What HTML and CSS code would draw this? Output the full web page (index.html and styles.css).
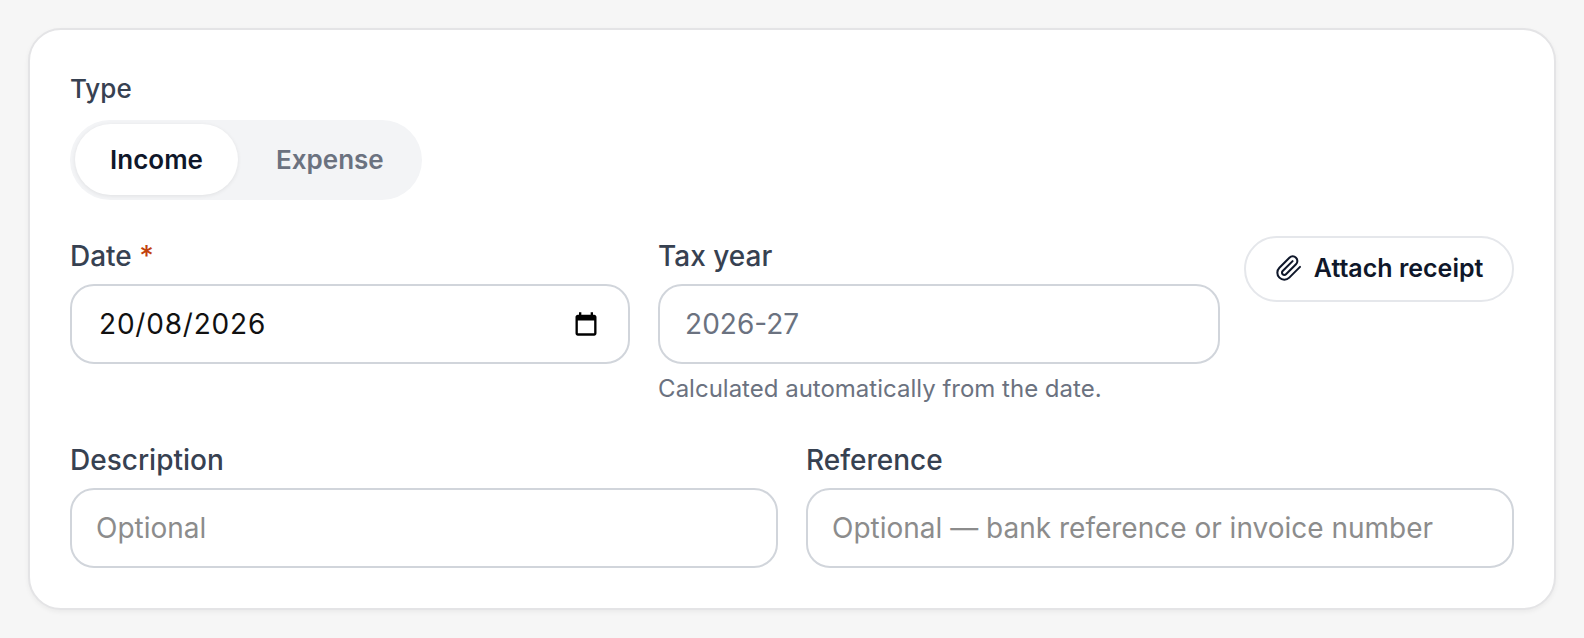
FILE: index.html
```html
<!DOCTYPE html>
<html lang="en">
<head>
<meta charset="utf-8">
<title>Transaction form</title>
<link rel="stylesheet" href="styles.css">
</head>
<body>
<form class="card">
  <div class="field">
    <span class="label label-type">Type</span>
    <div class="segment">
      <button type="button" class="seg-btn active">Income</button>
      <button type="button" class="seg-btn">Expense</button>
    </div>
  </div>
  <div class="row-date">
    <div class="field date-field">
      <label class="label">Date <span class="req">*</span></label>
      <div class="input input-value">
        <span>20/08/2026</span>
        <svg class="cal" viewBox="0 0 24 24" width="28" height="28" aria-hidden="true"><path d="M19 4h-1V2h-2v2H8V2H6v2H5c-1.100 0-2 .9-2 2v14c0 1.100.9 2 2 2h14c1.100 0 2-.9 2-2V6c0-1.100-.9-2-2-2zm0 16H5V9h14v11z"/></svg>
      </div>
    </div>
    <div class="field tax-field">
      <label class="label">Tax year</label>
      <div class="input input-muted">2026-27</div>
      <p class="hint">Calculated automatically from the date.</p>
    </div>
    <button type="button" class="attach">
      <svg viewBox="0 0 24 24" width="28" height="28" fill="none" stroke="currentColor" stroke-width="1.750" stroke-linecap="round" stroke-linejoin="round" aria-hidden="true"><path d="m21.440 11.050-9.190 9.190a6 6 0 0 1-8.490-8.490l8.570-8.570A4 4 0 1 1 18 8.840l-8.590 8.570a2 2 0 0 1-2.830-2.830l8.490-8.480"/></svg>
      Attach receipt
    </button>
  </div>
  <div class="row-two">
    <div class="field">
      <label class="label">Description</label>
      <div class="input input-placeholder">Optional</div>
    </div>
    <div class="field">
      <label class="label">Reference</label>
      <div class="input input-placeholder">Optional — bank reference or invoice number</div>
    </div>
  </div>
</form>
</body>
</html>
```
FILE: styles.css
```css
* { box-sizing: border-box; }
html, body { margin: 0; height: 100%; }
body {
  background: #f6f6f6;
  padding: 28px 28px 0;
  font-family: Inter, "Liberation Sans", sans-serif;
}
.card {
  height: 582px;
  background: #fff;
  border: 2px solid #e4e4e6;
  border-radius: 33px;
  padding: 41px 40px 0;
  box-shadow: 0 2px 5px rgba(0,0,0,.05);
  display: flex;
  flex-direction: column;
}
.field { display: flex; flex-direction: column; min-width: 0; }
.label {
  font-size: 28px;
  line-height: 40px;
  font-weight: 500;
  color: #374151;
}
.label-type { font-size: 26px; line-height: 36px; }
.req { color: #c2410c; }
.segment {
  margin-top: 13px;
  width: 352px;
  height: 80px;
  background: #f3f4f6;
  border-radius: 40px;
  padding: 4px 4px 4px 5px;
  display: flex;
}
.seg-btn {
  flex: none;
  height: 71px;
  border: 0;
  border-radius: 36px;
  background: transparent;
  font: 600 26px Inter, sans-serif;
  color: #6b7280;
  padding: 0 38px;
}
.seg-btn.active {
  width: 163px;
  padding: 0;
  background: #fff;
  color: #0f172a;
  box-shadow: 0 1px 4px rgba(0,0,0,.08);
}
.row-date {
  display: flex;
  align-items: flex-start;
  margin-top: 36px;
}
.date-field { width: 560px; margin-right: 28.500px; }
.tax-field { width: 562px; margin-right: 24.500px; }
.input {
  margin-top: 8px;
  height: 80px;
  border: 2px solid #d1d5db;
  border-radius: 24px;
  padding: 0 25px;
  font-size: 28px;
  display: flex;
  align-items: center;
  justify-content: space-between;
}
.input-value { color: #111; letter-spacing: .8px; padding-left: 27px; }
.input-muted { color: #6b7280; }
.input-placeholder { color: #8c8c8c; padding-left: 24px; }
.cal { margin-right: 3px; }
.hint {
  margin: 9px 0 0;
  font-size: 24px;
  line-height: 32px;
  color: #6b7280;
}
.attach {
  width: 270px;
  height: 66px;
  padding: 0 0 2px;
  border: 2px solid #e5e7eb;
  border-radius: 33px;
  background: #fff;
  color: #0f172a;
  font: 600 25px Inter, sans-serif;
  display: flex;
  align-items: center;
  justify-content: center;
  gap: 11px;
}
.row-two {
  display: grid;
  grid-template-columns: 1fr 1fr;
  column-gap: 28px;
  margin-top: 35px;
}
```
